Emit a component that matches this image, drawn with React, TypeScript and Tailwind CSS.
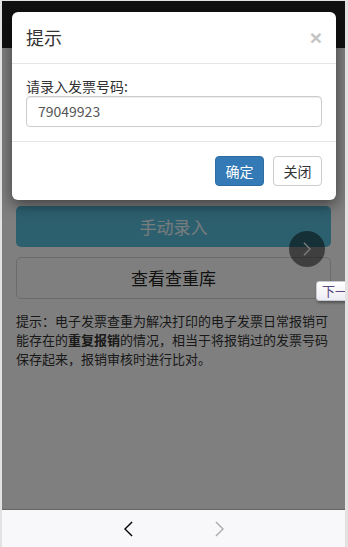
const font = { fontFamily: '"Noto Sans CJK SC", "Liberation Sans", sans-serif' };

function Chevron({ dir, className }: { dir: "left" | "right"; className?: string }) {
  return (
    <svg viewBox="0 0 10 18" className={className} fill="none" stroke="currentColor" strokeWidth="1.6">
      {dir === "left" ? <path d="M9 1 1 9l8 8" /> : <path d="M1 1l8 8-8 8" />}
    </svg>
  );
}

export default function App() {
  return (
    <div
      className="flex h-[547px] w-[348px] flex-col overflow-hidden bg-[#e2e2e2] pt-px pl-[2px] pr-[3px]"
      style={font}
    >
      <div className="relative flex-1 overflow-hidden bg-white">
        {/* page under the dialog */}
        <div className="h-[47px] bg-[#222]" />
        <div className="px-[14px] pt-[158px]">
          <button className="flex h-[41px] w-full items-center justify-center rounded-[5px] bg-[#5bc0de] text-[17px] text-white/90">
            手动录入
          </button>
          <button className="mt-[10px] flex h-[42px] w-full items-center justify-center rounded-[5px] border border-[#d6d6d6] bg-white text-[17px] text-[#222]">
            查看查重库
          </button>
          <p className="mt-[12px] text-[13px] leading-[19px] text-[#333]">
            提示：电子发票查重为解决打印的电子发票日常报销可能存在的<b className="font-bold">重复报销</b>
            的情况，相当于将报销过的发票号码保存起来，报销审核时进行比对。
          </p>
        </div>
        <div className="absolute left-[287px] top-[230px] flex h-[36px] w-[36px] items-center justify-center rounded-full bg-black/50 text-white">
          <Chevron dir="right" className="h-[14px] w-[8px]" />
        </div>

        {/* backdrop */}
        <div className="absolute inset-0 bg-black/50" />

        {/* dialog */}
        <div className="absolute left-[10px] top-[11px] w-[324px] rounded-[6px] bg-white shadow-[0_5px_15px_rgba(0,0,0,0.5)]">
          <div className="flex items-center justify-between border-b border-[#e5e5e5] py-[13px] pl-[14px] pr-[14px]">
            <h4 className="text-[18px] leading-[25px] text-[#333]">提示</h4>
            <span className="text-[21px] font-bold leading-none text-[#c4c4c4]" style={{ fontFamily: '"Liberation Sans", sans-serif' }}>
              ×
            </span>
          </div>
          <div className="px-[14px] pt-[13px] pb-[14px]">
            <label className="block text-[14px] leading-[19px] text-[#333]">请录入发票号码:</label>
            <div className="flex h-[31px] items-center rounded-[4px] border border-[#ccc] px-[11px] text-[14px] text-[#555] shadow-[inset_0_1px_1px_rgba(0,0,0,0.075)]">
              79049923
            </div>
          </div>
          <div className="flex justify-end gap-[9px] border-t border-[#e5e5e5] pt-[14px] pr-[14px] pb-[14px]">
            <button className="h-[30px] w-[49px] rounded-[4px] border border-[#2e6da4] bg-[#337ab7] text-[14px] text-white">
              确定
            </button>
            <button className="h-[30px] w-[49px] rounded-[4px] border border-[#ccc] bg-white text-[14px] text-[#333]">
              关闭
            </button>
          </div>
        </div>

        {/* tooltip */}
        <div className="absolute left-[314px] top-[280px] flex h-[20px] items-center whitespace-nowrap rounded-l-[3px] border border-[#c8c8d0] bg-gradient-to-b from-white to-[#ececf4] pl-[5px] text-[13px] text-[#5a4a80] shadow-[1px_2px_3px_rgba(0,0,0,0.35)]">
          下一步
        </div>
      </div>

      {/* browser toolbar */}
      <div className="flex h-[38px] shrink-0 items-center border-t border-[#666] bg-[#f8f8fa]">
        <Chevron dir="left" className="ml-[122px] h-[16px] w-[9px] text-black" />
        <Chevron dir="right" className="ml-[82px] h-[16px] w-[9px] text-[#aaa]" />
      </div>
    </div>
  );
}
